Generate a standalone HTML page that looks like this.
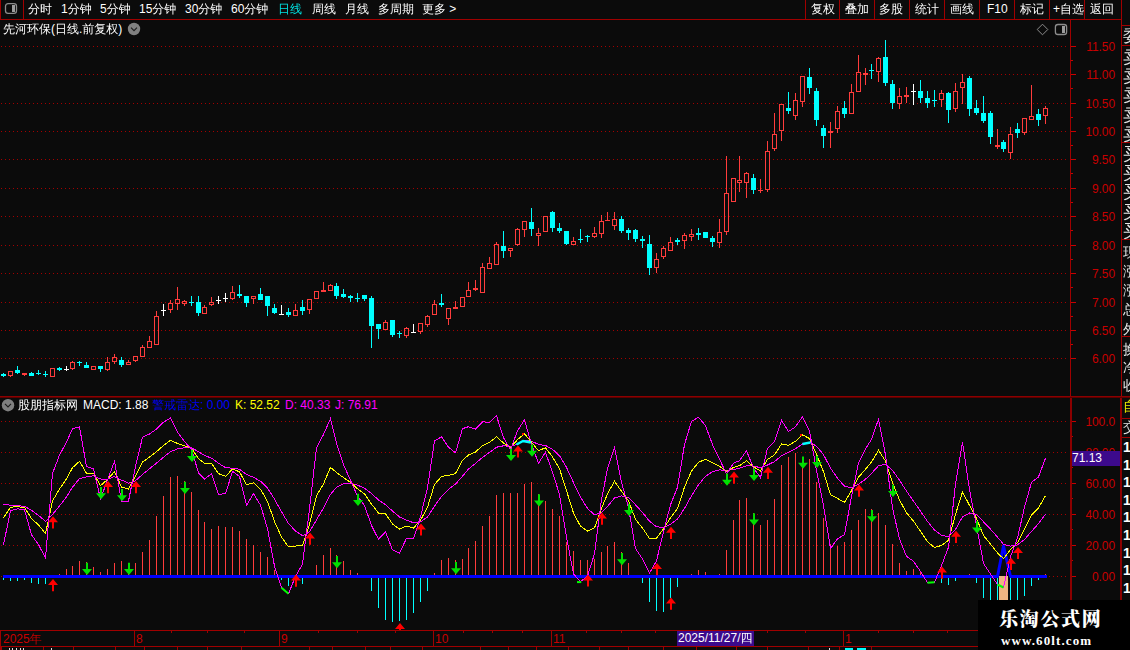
<!DOCTYPE html>
<html><head><meta charset="utf-8"><title>chart</title>
<style>
html,body{margin:0;padding:0;background:#0b0b0b;}
body{width:1130px;height:650px;position:relative;overflow:hidden;font-family:"Liberation Sans","WenQuanYi Zen Hei","Noto Sans CJK SC",sans-serif;}
.t{position:absolute;white-space:nowrap;line-height:15px;font-size:12px;}
.r{text-align:right;}
svg{position:absolute;left:0;top:0;}
</style></head><body>
<svg width="1130" height="650" viewBox="0 0 1130 650" shape-rendering="crispEdges">
<line x1="1" y1="46.5" x2="1067" y2="46.5" stroke="#a40000" stroke-width="1" stroke-dasharray="1 3"/>
<line x1="1" y1="74.5" x2="1067" y2="74.5" stroke="#a40000" stroke-width="1" stroke-dasharray="1 3"/>
<line x1="1" y1="103.5" x2="1067" y2="103.5" stroke="#a40000" stroke-width="1" stroke-dasharray="1 3"/>
<line x1="1" y1="131.5" x2="1067" y2="131.5" stroke="#a40000" stroke-width="1" stroke-dasharray="1 3"/>
<line x1="1" y1="159.5" x2="1067" y2="159.5" stroke="#a40000" stroke-width="1" stroke-dasharray="1 3"/>
<line x1="1" y1="188.5" x2="1067" y2="188.5" stroke="#a40000" stroke-width="1" stroke-dasharray="1 3"/>
<line x1="1" y1="216.5" x2="1067" y2="216.5" stroke="#a40000" stroke-width="1" stroke-dasharray="1 3"/>
<line x1="1" y1="245.5" x2="1067" y2="245.5" stroke="#a40000" stroke-width="1" stroke-dasharray="1 3"/>
<line x1="1" y1="273.5" x2="1067" y2="273.5" stroke="#a40000" stroke-width="1" stroke-dasharray="1 3"/>
<line x1="1" y1="302.5" x2="1067" y2="302.5" stroke="#a40000" stroke-width="1" stroke-dasharray="1 3"/>
<line x1="1" y1="330.5" x2="1067" y2="330.5" stroke="#a40000" stroke-width="1" stroke-dasharray="1 3"/>
<line x1="1" y1="358.5" x2="1067" y2="358.5" stroke="#a40000" stroke-width="1" stroke-dasharray="1 3"/>
<line x1="1" y1="421.5" x2="1067" y2="421.5" stroke="#a40000" stroke-width="1" stroke-dasharray="1 3"/>
<line x1="1" y1="452.5" x2="1067" y2="452.5" stroke="#a40000" stroke-width="1" stroke-dasharray="1 3"/>
<line x1="1" y1="483.5" x2="1067" y2="483.5" stroke="#a40000" stroke-width="1" stroke-dasharray="1 3"/>
<line x1="1" y1="514.5" x2="1067" y2="514.5" stroke="#a40000" stroke-width="1" stroke-dasharray="1 3"/>
<line x1="1" y1="545.5" x2="1067" y2="545.5" stroke="#a40000" stroke-width="1" stroke-dasharray="1 3"/>
<line x1="1" y1="576.5" x2="1067" y2="576.5" stroke="#a40000" stroke-width="1" stroke-dasharray="1 3"/>
<rect x="3" y="577" width="1" height="3" fill="#00ffff"/>
<rect x="10" y="577" width="1" height="4" fill="#00ffff"/>
<rect x="17" y="577" width="1" height="4" fill="#00ffff"/>
<rect x="24" y="577" width="1" height="3" fill="#00ffff"/>
<rect x="31" y="577" width="1" height="6" fill="#00ffff"/>
<rect x="38" y="577" width="1" height="7" fill="#00ffff"/>
<rect x="45" y="577" width="1" height="7" fill="#00ffff"/>
<rect x="59" y="574" width="1" height="2" fill="#ff3c3c"/>
<rect x="66" y="569" width="1" height="7" fill="#ff3c3c"/>
<rect x="72" y="566" width="1" height="10" fill="#ff3c3c"/>
<rect x="79" y="561" width="1" height="15" fill="#ff3c3c"/>
<rect x="86" y="562" width="1" height="14" fill="#ff3c3c"/>
<rect x="93" y="567" width="1" height="9" fill="#ff3c3c"/>
<rect x="100" y="572" width="1" height="4" fill="#ff3c3c"/>
<rect x="107" y="569" width="1" height="7" fill="#ff3c3c"/>
<rect x="114" y="563" width="1" height="13" fill="#ff3c3c"/>
<rect x="121" y="561" width="1" height="15" fill="#ff3c3c"/>
<rect x="128" y="563" width="1" height="13" fill="#ff3c3c"/>
<rect x="135" y="563" width="1" height="13" fill="#ff3c3c"/>
<rect x="142" y="552" width="1" height="24" fill="#ff3c3c"/>
<rect x="149" y="540" width="1" height="36" fill="#ff3c3c"/>
<rect x="156" y="516" width="1" height="60" fill="#ff3c3c"/>
<rect x="163" y="496" width="1" height="80" fill="#ff3c3c"/>
<rect x="170" y="477" width="1" height="99" fill="#ff3c3c"/>
<rect x="177" y="476" width="1" height="100" fill="#ff3c3c"/>
<rect x="184" y="481" width="1" height="95" fill="#ff3c3c"/>
<rect x="191" y="492" width="1" height="84" fill="#ff3c3c"/>
<rect x="198" y="510" width="1" height="66" fill="#ff3c3c"/>
<rect x="204" y="522" width="1" height="54" fill="#ff3c3c"/>
<rect x="211" y="529" width="1" height="47" fill="#ff3c3c"/>
<rect x="218" y="526" width="1" height="50" fill="#ff3c3c"/>
<rect x="225" y="527" width="1" height="49" fill="#ff3c3c"/>
<rect x="232" y="527" width="1" height="49" fill="#ff3c3c"/>
<rect x="239" y="531" width="1" height="45" fill="#ff3c3c"/>
<rect x="246" y="539" width="1" height="37" fill="#ff3c3c"/>
<rect x="253" y="545" width="1" height="31" fill="#ff3c3c"/>
<rect x="260" y="552" width="1" height="24" fill="#ff3c3c"/>
<rect x="267" y="557" width="1" height="19" fill="#ff3c3c"/>
<rect x="274" y="570" width="1" height="6" fill="#ff3c3c"/>
<rect x="281" y="577" width="1" height="3" fill="#00ffff"/>
<rect x="288" y="577" width="1" height="9" fill="#00ffff"/>
<rect x="295" y="577" width="1" height="5" fill="#00ffff"/>
<rect x="302" y="577" width="1" height="7" fill="#00ffff"/>
<rect x="316" y="565" width="1" height="11" fill="#ff3c3c"/>
<rect x="323" y="555" width="1" height="21" fill="#ff3c3c"/>
<rect x="330" y="548" width="1" height="28" fill="#ff3c3c"/>
<rect x="336" y="555" width="1" height="21" fill="#ff3c3c"/>
<rect x="343" y="561" width="1" height="15" fill="#ff3c3c"/>
<rect x="350" y="570" width="1" height="6" fill="#ff3c3c"/>
<rect x="357" y="573" width="1" height="3" fill="#ff3c3c"/>
<rect x="371" y="577" width="1" height="14" fill="#00ffff"/>
<rect x="378" y="577" width="1" height="31" fill="#00ffff"/>
<rect x="385" y="577" width="1" height="43" fill="#00ffff"/>
<rect x="392" y="577" width="1" height="45" fill="#00ffff"/>
<rect x="399" y="577" width="1" height="44" fill="#00ffff"/>
<rect x="406" y="577" width="1" height="43" fill="#00ffff"/>
<rect x="413" y="577" width="1" height="36" fill="#00ffff"/>
<rect x="420" y="577" width="1" height="25" fill="#00ffff"/>
<rect x="427" y="577" width="1" height="14" fill="#00ffff"/>
<rect x="434" y="573" width="1" height="3" fill="#ff3c3c"/>
<rect x="441" y="560" width="1" height="16" fill="#ff3c3c"/>
<rect x="448" y="558" width="1" height="18" fill="#ff3c3c"/>
<rect x="455" y="560" width="1" height="16" fill="#ff3c3c"/>
<rect x="462" y="559" width="1" height="17" fill="#ff3c3c"/>
<rect x="468" y="548" width="1" height="28" fill="#ff3c3c"/>
<rect x="475" y="541" width="1" height="35" fill="#ff3c3c"/>
<rect x="482" y="526" width="1" height="50" fill="#ff3c3c"/>
<rect x="489" y="516" width="1" height="60" fill="#ff3c3c"/>
<rect x="496" y="495" width="1" height="81" fill="#ff3c3c"/>
<rect x="503" y="493" width="1" height="83" fill="#ff3c3c"/>
<rect x="510" y="493" width="1" height="83" fill="#ff3c3c"/>
<rect x="517" y="493" width="1" height="83" fill="#ff3c3c"/>
<rect x="524" y="484" width="1" height="92" fill="#ff3c3c"/>
<rect x="531" y="482" width="1" height="94" fill="#ff3c3c"/>
<rect x="538" y="494" width="1" height="82" fill="#ff3c3c"/>
<rect x="545" y="501" width="1" height="75" fill="#ff3c3c"/>
<rect x="552" y="509" width="1" height="67" fill="#ff3c3c"/>
<rect x="559" y="516" width="1" height="60" fill="#ff3c3c"/>
<rect x="566" y="542" width="1" height="34" fill="#ff3c3c"/>
<rect x="573" y="551" width="1" height="25" fill="#ff3c3c"/>
<rect x="580" y="560" width="1" height="16" fill="#ff3c3c"/>
<rect x="587" y="560" width="1" height="16" fill="#ff3c3c"/>
<rect x="594" y="559" width="1" height="17" fill="#ff3c3c"/>
<rect x="601" y="552" width="1" height="24" fill="#ff3c3c"/>
<rect x="607" y="546" width="1" height="30" fill="#ff3c3c"/>
<rect x="614" y="542" width="1" height="34" fill="#ff3c3c"/>
<rect x="621" y="552" width="1" height="24" fill="#ff3c3c"/>
<rect x="628" y="563" width="1" height="13" fill="#ff3c3c"/>
<rect x="642" y="577" width="1" height="6" fill="#00ffff"/>
<rect x="649" y="577" width="1" height="25" fill="#00ffff"/>
<rect x="656" y="577" width="1" height="34" fill="#00ffff"/>
<rect x="663" y="577" width="1" height="35" fill="#00ffff"/>
<rect x="670" y="577" width="1" height="21" fill="#00ffff"/>
<rect x="677" y="577" width="1" height="10" fill="#00ffff"/>
<rect x="691" y="574" width="1" height="2" fill="#ff3c3c"/>
<rect x="698" y="570" width="1" height="6" fill="#ff3c3c"/>
<rect x="705" y="572" width="1" height="4" fill="#ff3c3c"/>
<rect x="719" y="574" width="1" height="2" fill="#ff3c3c"/>
<rect x="726" y="550" width="1" height="26" fill="#ff3c3c"/>
<rect x="733" y="520" width="1" height="56" fill="#ff3c3c"/>
<rect x="739" y="500" width="1" height="76" fill="#ff3c3c"/>
<rect x="746" y="498" width="1" height="78" fill="#ff3c3c"/>
<rect x="753" y="513" width="1" height="63" fill="#ff3c3c"/>
<rect x="760" y="525" width="1" height="51" fill="#ff3c3c"/>
<rect x="767" y="520" width="1" height="56" fill="#ff3c3c"/>
<rect x="774" y="499" width="1" height="77" fill="#ff3c3c"/>
<rect x="781" y="465" width="1" height="111" fill="#ff3c3c"/>
<rect x="788" y="457" width="1" height="119" fill="#ff3c3c"/>
<rect x="795" y="453" width="1" height="123" fill="#ff3c3c"/>
<rect x="802" y="459" width="1" height="117" fill="#ff3c3c"/>
<rect x="809" y="459" width="1" height="117" fill="#ff3c3c"/>
<rect x="816" y="482" width="1" height="94" fill="#ff3c3c"/>
<rect x="823" y="518" width="1" height="58" fill="#ff3c3c"/>
<rect x="830" y="544" width="1" height="32" fill="#ff3c3c"/>
<rect x="837" y="546" width="1" height="30" fill="#ff3c3c"/>
<rect x="844" y="542" width="1" height="34" fill="#ff3c3c"/>
<rect x="851" y="530" width="1" height="46" fill="#ff3c3c"/>
<rect x="858" y="520" width="1" height="56" fill="#ff3c3c"/>
<rect x="865" y="509" width="1" height="67" fill="#ff3c3c"/>
<rect x="871" y="509" width="1" height="67" fill="#ff3c3c"/>
<rect x="878" y="513" width="1" height="63" fill="#ff3c3c"/>
<rect x="885" y="525" width="1" height="51" fill="#ff3c3c"/>
<rect x="892" y="544" width="1" height="32" fill="#ff3c3c"/>
<rect x="899" y="563" width="1" height="13" fill="#ff3c3c"/>
<rect x="906" y="571" width="1" height="5" fill="#ff3c3c"/>
<rect x="913" y="569" width="1" height="7" fill="#ff3c3c"/>
<rect x="920" y="572" width="1" height="4" fill="#ff3c3c"/>
<rect x="941" y="577" width="1" height="6" fill="#00ffff"/>
<rect x="948" y="577" width="1" height="8" fill="#00ffff"/>
<rect x="955" y="577" width="1" height="4" fill="#00ffff"/>
<rect x="969" y="574" width="1" height="2" fill="#ff3c3c"/>
<rect x="976" y="577" width="1" height="6" fill="#00ffff"/>
<rect x="983" y="577" width="1" height="21" fill="#00ffff"/>
<rect x="990" y="577" width="1" height="23" fill="#00ffff"/>
<rect x="997" y="577" width="1" height="23" fill="#00ffff"/>
<rect x="1003" y="577" width="1" height="23" fill="#00ffff"/>
<rect x="1010" y="577" width="1" height="23" fill="#00ffff"/>
<rect x="1017" y="577" width="1" height="23" fill="#00ffff"/>
<rect x="1024" y="577" width="1" height="19" fill="#00ffff"/>
<rect x="1031" y="577" width="1" height="9" fill="#00ffff"/>
<rect x="1038" y="577" width="1" height="3" fill="#00ffff"/>
<rect x="1045" y="574" width="1" height="2" fill="#ff3c3c"/>
<rect x="999" y="576" width="9" height="24" fill="#f0b482"/>
<rect x="3" y="373" width="1" height="4" fill="#00ffff"/>
<rect x="1" y="374" width="5" height="2" fill="#00ffff"/>
<rect x="10" y="376" width="1" height="1" fill="#ff3c3c"/>
<rect x="8.5" y="371.5" width="4" height="4" fill="none" stroke="#ff3c3c" stroke-width="1"/>
<rect x="17" y="366" width="1" height="8" fill="#00ffff"/>
<rect x="15" y="370" width="5" height="3" fill="#00ffff"/>
<rect x="24" y="373" width="1" height="3" fill="#ff3c3c"/>
<rect x="22" y="373" width="5" height="2" fill="#ff3c3c"/>
<rect x="31" y="372" width="1" height="4" fill="#00ffff"/>
<rect x="29" y="373" width="5" height="3" fill="#00ffff"/>
<rect x="38" y="370" width="1" height="5" fill="#00ffff"/>
<rect x="36" y="373" width="5" height="1" fill="#00ffff"/>
<rect x="45" y="371" width="1" height="6" fill="#00ffff"/>
<rect x="43" y="374" width="5" height="1" fill="#00ffff"/>
<rect x="50.5" y="368.5" width="4" height="8" fill="none" stroke="#ff3c3c" stroke-width="1"/>
<rect x="59" y="367" width="1" height="4" fill="#00ffff"/>
<rect x="57" y="368" width="5" height="2" fill="#00ffff"/>
<rect x="66" y="366" width="1" height="5" fill="#ffffff"/>
<rect x="64" y="369" width="5" height="1" fill="#ffffff"/>
<rect x="72" y="361" width="1" height="1" fill="#ff3c3c"/>
<rect x="72" y="369" width="1" height="1" fill="#ff3c3c"/>
<rect x="70.5" y="362.5" width="4" height="6" fill="none" stroke="#ff3c3c" stroke-width="1"/>
<rect x="79" y="361" width="1" height="5" fill="#00ffff"/>
<rect x="77" y="362" width="5" height="1" fill="#00ffff"/>
<rect x="86" y="362" width="1" height="6" fill="#00ffff"/>
<rect x="84" y="365" width="5" height="3" fill="#00ffff"/>
<rect x="91.5" y="366.5" width="4" height="3" fill="none" stroke="#ff3c3c" stroke-width="1"/>
<rect x="100" y="366" width="1" height="6" fill="#00ffff"/>
<rect x="98" y="366" width="5" height="3" fill="#00ffff"/>
<rect x="107" y="357" width="1" height="5" fill="#ff3c3c"/>
<rect x="107" y="370" width="1" height="1" fill="#ff3c3c"/>
<rect x="105.5" y="362.5" width="4" height="7" fill="none" stroke="#ff3c3c" stroke-width="1"/>
<rect x="114" y="354" width="1" height="3" fill="#ff3c3c"/>
<rect x="114" y="362" width="1" height="2" fill="#ff3c3c"/>
<rect x="112.5" y="357.5" width="4" height="4" fill="none" stroke="#ff3c3c" stroke-width="1"/>
<rect x="121" y="357" width="1" height="10" fill="#00ffff"/>
<rect x="119" y="360" width="5" height="5" fill="#00ffff"/>
<rect x="128" y="360" width="1" height="2" fill="#ff3c3c"/>
<rect x="126.5" y="362.5" width="4" height="2" fill="none" stroke="#ff3c3c" stroke-width="1"/>
<rect x="135" y="361" width="1" height="1" fill="#ff3c3c"/>
<rect x="133.5" y="356.5" width="4" height="4" fill="none" stroke="#ff3c3c" stroke-width="1"/>
<rect x="142" y="345" width="1" height="2" fill="#ff3c3c"/>
<rect x="140.5" y="347.5" width="4" height="9" fill="none" stroke="#ff3c3c" stroke-width="1"/>
<rect x="149" y="336" width="1" height="5" fill="#ff3c3c"/>
<rect x="147.5" y="341.5" width="4" height="6" fill="none" stroke="#ff3c3c" stroke-width="1"/>
<rect x="156" y="311" width="1" height="5" fill="#ff3c3c"/>
<rect x="154.5" y="316.5" width="4" height="28" fill="none" stroke="#ff3c3c" stroke-width="1"/>
<rect x="163" y="304" width="1" height="12" fill="#ffffff"/>
<rect x="161" y="310" width="5" height="1" fill="#ffffff"/>
<rect x="170" y="300" width="1" height="3" fill="#ff3c3c"/>
<rect x="170" y="310" width="1" height="3" fill="#ff3c3c"/>
<rect x="168.5" y="303.5" width="4" height="6" fill="none" stroke="#ff3c3c" stroke-width="1"/>
<rect x="177" y="287" width="1" height="12" fill="#ff3c3c"/>
<rect x="177" y="304" width="1" height="6" fill="#ff3c3c"/>
<rect x="175.5" y="299.5" width="4" height="4" fill="none" stroke="#ff3c3c" stroke-width="1"/>
<rect x="184" y="300" width="1" height="1" fill="#ff3c3c"/>
<rect x="184" y="304" width="1" height="2" fill="#ff3c3c"/>
<rect x="182.5" y="301.5" width="4" height="2" fill="none" stroke="#ff3c3c" stroke-width="1"/>
<rect x="191" y="296" width="1" height="10" fill="#00ffff"/>
<rect x="189" y="302" width="5" height="1" fill="#00ffff"/>
<rect x="198" y="296" width="1" height="20" fill="#00ffff"/>
<rect x="196" y="302" width="5" height="11" fill="#00ffff"/>
<rect x="204" y="305" width="1" height="2" fill="#ff3c3c"/>
<rect x="202.5" y="307.5" width="4" height="6" fill="none" stroke="#ff3c3c" stroke-width="1"/>
<rect x="211" y="297" width="1" height="5" fill="#ff3c3c"/>
<rect x="211" y="305" width="1" height="1" fill="#ff3c3c"/>
<rect x="209.5" y="302.5" width="4" height="2" fill="none" stroke="#ff3c3c" stroke-width="1"/>
<rect x="218" y="296" width="1" height="8" fill="#ffffff"/>
<rect x="216" y="300" width="5" height="1" fill="#ffffff"/>
<rect x="225" y="293" width="1" height="9" fill="#ffffff"/>
<rect x="223" y="298" width="5" height="1" fill="#ffffff"/>
<rect x="232" y="286" width="1" height="6" fill="#ff3c3c"/>
<rect x="232" y="299" width="1" height="1" fill="#ff3c3c"/>
<rect x="230.5" y="292.5" width="4" height="6" fill="none" stroke="#ff3c3c" stroke-width="1"/>
<rect x="239" y="285" width="1" height="13" fill="#00ffff"/>
<rect x="237" y="294" width="5" height="2" fill="#00ffff"/>
<rect x="246" y="296" width="1" height="11" fill="#00ffff"/>
<rect x="244" y="296" width="5" height="7" fill="#00ffff"/>
<rect x="253" y="299" width="1" height="5" fill="#ff3c3c"/>
<rect x="251.5" y="296.5" width="4" height="2" fill="none" stroke="#ff3c3c" stroke-width="1"/>
<rect x="260" y="288" width="1" height="12" fill="#00ffff"/>
<rect x="258" y="294" width="5" height="6" fill="#00ffff"/>
<rect x="267" y="296" width="1" height="20" fill="#00ffff"/>
<rect x="265" y="296" width="5" height="10" fill="#00ffff"/>
<rect x="274" y="304" width="1" height="10" fill="#00ffff"/>
<rect x="272" y="308" width="5" height="5" fill="#00ffff"/>
<rect x="281" y="305" width="1" height="10" fill="#ffffff"/>
<rect x="279" y="314" width="5" height="1" fill="#ffffff"/>
<rect x="288" y="308" width="1" height="9" fill="#00ffff"/>
<rect x="286" y="312" width="5" height="3" fill="#00ffff"/>
<rect x="295" y="304" width="1" height="6" fill="#ff3c3c"/>
<rect x="293.5" y="310.5" width="4" height="5" fill="none" stroke="#ff3c3c" stroke-width="1"/>
<rect x="302" y="300" width="1" height="15" fill="#00ffff"/>
<rect x="300" y="307" width="5" height="4" fill="#00ffff"/>
<rect x="309" y="310" width="1" height="4" fill="#ff3c3c"/>
<rect x="307.5" y="299.5" width="4" height="10" fill="none" stroke="#ff3c3c" stroke-width="1"/>
<rect x="314.5" y="291.5" width="4" height="7" fill="none" stroke="#ff3c3c" stroke-width="1"/>
<rect x="323" y="282" width="1" height="10" fill="#ff3c3c"/>
<rect x="321" y="290" width="5" height="2" fill="#ff3c3c"/>
<rect x="330" y="284" width="1" height="1" fill="#ff3c3c"/>
<rect x="328.5" y="285.5" width="4" height="5" fill="none" stroke="#ff3c3c" stroke-width="1"/>
<rect x="336" y="283" width="1" height="16" fill="#00ffff"/>
<rect x="334" y="286" width="5" height="10" fill="#00ffff"/>
<rect x="343" y="289" width="1" height="9" fill="#00ffff"/>
<rect x="341" y="294" width="5" height="3" fill="#00ffff"/>
<rect x="350" y="295" width="1" height="7" fill="#00ffff"/>
<rect x="348" y="296" width="5" height="2" fill="#00ffff"/>
<rect x="357" y="293" width="1" height="9" fill="#00ffff"/>
<rect x="355" y="298" width="5" height="1" fill="#00ffff"/>
<rect x="364" y="295" width="1" height="6" fill="#00ffff"/>
<rect x="362" y="295" width="5" height="4" fill="#00ffff"/>
<rect x="371" y="296" width="1" height="52" fill="#00ffff"/>
<rect x="369" y="298" width="5" height="28" fill="#00ffff"/>
<rect x="378" y="324" width="1" height="15" fill="#00ffff"/>
<rect x="376" y="324" width="5" height="5" fill="#00ffff"/>
<rect x="385" y="320" width="1" height="2" fill="#ff3c3c"/>
<rect x="383.5" y="322.5" width="4" height="7" fill="none" stroke="#ff3c3c" stroke-width="1"/>
<rect x="392" y="320" width="1" height="17" fill="#00ffff"/>
<rect x="390" y="320" width="5" height="15" fill="#00ffff"/>
<rect x="399" y="331" width="1" height="7" fill="#00ffff"/>
<rect x="397" y="333" width="5" height="1" fill="#00ffff"/>
<rect x="406" y="327" width="1" height="1" fill="#ff3c3c"/>
<rect x="406" y="336" width="1" height="2" fill="#ff3c3c"/>
<rect x="404.5" y="328.5" width="4" height="7" fill="none" stroke="#ff3c3c" stroke-width="1"/>
<rect x="413" y="324" width="1" height="9" fill="#ffffff"/>
<rect x="411" y="332" width="5" height="1" fill="#ffffff"/>
<rect x="420" y="332" width="1" height="2" fill="#ff3c3c"/>
<rect x="418.5" y="323.5" width="4" height="8" fill="none" stroke="#ff3c3c" stroke-width="1"/>
<rect x="427" y="315" width="1" height="1" fill="#ff3c3c"/>
<rect x="427" y="325" width="1" height="2" fill="#ff3c3c"/>
<rect x="425.5" y="316.5" width="4" height="8" fill="none" stroke="#ff3c3c" stroke-width="1"/>
<rect x="434" y="300" width="1" height="4" fill="#ff3c3c"/>
<rect x="432.5" y="304.5" width="4" height="10" fill="none" stroke="#ff3c3c" stroke-width="1"/>
<rect x="441" y="294" width="1" height="13" fill="#00ffff"/>
<rect x="439" y="303" width="5" height="2" fill="#00ffff"/>
<rect x="448" y="319" width="1" height="6" fill="#ff3c3c"/>
<rect x="446.5" y="308.5" width="4" height="10" fill="none" stroke="#ff3c3c" stroke-width="1"/>
<rect x="455" y="301" width="1" height="8" fill="#ff3c3c"/>
<rect x="453" y="307" width="5" height="2" fill="#ff3c3c"/>
<rect x="460.5" y="297.5" width="4" height="9" fill="none" stroke="#ff3c3c" stroke-width="1"/>
<rect x="468" y="282" width="1" height="8" fill="#ff3c3c"/>
<rect x="466.5" y="290.5" width="4" height="6" fill="none" stroke="#ff3c3c" stroke-width="1"/>
<rect x="475" y="280" width="1" height="11" fill="#ff3c3c"/>
<rect x="473" y="288" width="5" height="2" fill="#ff3c3c"/>
<rect x="482" y="263" width="1" height="4" fill="#ff3c3c"/>
<rect x="480.5" y="267.5" width="4" height="25" fill="none" stroke="#ff3c3c" stroke-width="1"/>
<rect x="489" y="257" width="1" height="6" fill="#ff3c3c"/>
<rect x="487.5" y="263.5" width="4" height="5" fill="none" stroke="#ff3c3c" stroke-width="1"/>
<rect x="496" y="242" width="1" height="2" fill="#ff3c3c"/>
<rect x="494.5" y="244.5" width="4" height="20" fill="none" stroke="#ff3c3c" stroke-width="1"/>
<rect x="503" y="231" width="1" height="27" fill="#00ffff"/>
<rect x="501" y="246" width="5" height="5" fill="#00ffff"/>
<rect x="510" y="251" width="1" height="6" fill="#ff3c3c"/>
<rect x="508.5" y="248.5" width="4" height="2" fill="none" stroke="#ff3c3c" stroke-width="1"/>
<rect x="517" y="228" width="1" height="1" fill="#ff3c3c"/>
<rect x="517" y="245" width="1" height="1" fill="#ff3c3c"/>
<rect x="515.5" y="229.5" width="4" height="15" fill="none" stroke="#ff3c3c" stroke-width="1"/>
<rect x="524" y="230" width="1" height="7" fill="#ff3c3c"/>
<rect x="522.5" y="221.5" width="4" height="8" fill="none" stroke="#ff3c3c" stroke-width="1"/>
<rect x="531" y="208" width="1" height="28" fill="#00ffff"/>
<rect x="529" y="222" width="5" height="7" fill="#00ffff"/>
<rect x="538" y="228" width="1" height="5" fill="#ff3c3c"/>
<rect x="538" y="236" width="1" height="10" fill="#ff3c3c"/>
<rect x="536.5" y="233.5" width="4" height="2" fill="none" stroke="#ff3c3c" stroke-width="1"/>
<rect x="543.5" y="216.5" width="4" height="15" fill="none" stroke="#ff3c3c" stroke-width="1"/>
<rect x="552" y="211" width="1" height="21" fill="#00ffff"/>
<rect x="550" y="212" width="5" height="16" fill="#00ffff"/>
<rect x="559" y="223" width="1" height="10" fill="#00ffff"/>
<rect x="557" y="228" width="5" height="3" fill="#00ffff"/>
<rect x="566" y="231" width="1" height="14" fill="#00ffff"/>
<rect x="564" y="231" width="5" height="13" fill="#00ffff"/>
<rect x="573" y="237" width="1" height="4" fill="#ff3c3c"/>
<rect x="571.5" y="241.5" width="4" height="3" fill="none" stroke="#ff3c3c" stroke-width="1"/>
<rect x="580" y="229" width="1" height="14" fill="#00ffff"/>
<rect x="578" y="239" width="5" height="1" fill="#00ffff"/>
<rect x="587" y="235" width="1" height="7" fill="#00ffff"/>
<rect x="585" y="236" width="5" height="1" fill="#00ffff"/>
<rect x="594" y="227" width="1" height="6" fill="#ff3c3c"/>
<rect x="594" y="237" width="1" height="1" fill="#ff3c3c"/>
<rect x="592.5" y="233.5" width="4" height="3" fill="none" stroke="#ff3c3c" stroke-width="1"/>
<rect x="601" y="215" width="1" height="6" fill="#ff3c3c"/>
<rect x="601" y="234" width="1" height="4" fill="#ff3c3c"/>
<rect x="599.5" y="221.5" width="4" height="12" fill="none" stroke="#ff3c3c" stroke-width="1"/>
<rect x="607" y="212" width="1" height="9" fill="#ff3c3c"/>
<rect x="605" y="220" width="5" height="1" fill="#ff3c3c"/>
<rect x="614" y="212" width="1" height="7" fill="#ff3c3c"/>
<rect x="614" y="226" width="1" height="4" fill="#ff3c3c"/>
<rect x="612.5" y="219.5" width="4" height="6" fill="none" stroke="#ff3c3c" stroke-width="1"/>
<rect x="621" y="216" width="1" height="17" fill="#00ffff"/>
<rect x="619" y="219" width="5" height="12" fill="#00ffff"/>
<rect x="628" y="228" width="1" height="12" fill="#00ffff"/>
<rect x="626" y="230" width="5" height="3" fill="#00ffff"/>
<rect x="635" y="229" width="1" height="13" fill="#00ffff"/>
<rect x="633" y="230" width="5" height="9" fill="#00ffff"/>
<rect x="642" y="236" width="1" height="12" fill="#00ffff"/>
<rect x="640" y="239" width="5" height="2" fill="#00ffff"/>
<rect x="649" y="235" width="1" height="40" fill="#00ffff"/>
<rect x="647" y="244" width="5" height="24" fill="#00ffff"/>
<rect x="656" y="253" width="1" height="6" fill="#ff3c3c"/>
<rect x="656" y="268" width="1" height="5" fill="#ff3c3c"/>
<rect x="654.5" y="259.5" width="4" height="8" fill="none" stroke="#ff3c3c" stroke-width="1"/>
<rect x="663" y="246" width="1" height="2" fill="#ff3c3c"/>
<rect x="663" y="257" width="1" height="2" fill="#ff3c3c"/>
<rect x="661.5" y="248.5" width="4" height="8" fill="none" stroke="#ff3c3c" stroke-width="1"/>
<rect x="670" y="237" width="1" height="5" fill="#ff3c3c"/>
<rect x="668.5" y="242.5" width="4" height="8" fill="none" stroke="#ff3c3c" stroke-width="1"/>
<rect x="677" y="238" width="1" height="7" fill="#00ffff"/>
<rect x="675" y="240" width="5" height="2" fill="#00ffff"/>
<rect x="684" y="233" width="1" height="2" fill="#ff3c3c"/>
<rect x="684" y="241" width="1" height="8" fill="#ff3c3c"/>
<rect x="682.5" y="235.5" width="4" height="5" fill="none" stroke="#ff3c3c" stroke-width="1"/>
<rect x="691" y="229" width="1" height="5" fill="#ff3c3c"/>
<rect x="691" y="237" width="1" height="4" fill="#ff3c3c"/>
<rect x="689.5" y="234.5" width="4" height="2" fill="none" stroke="#ff3c3c" stroke-width="1"/>
<rect x="698" y="228" width="1" height="12" fill="#00ffff"/>
<rect x="696" y="233" width="5" height="2" fill="#00ffff"/>
<rect x="705" y="232" width="1" height="6" fill="#00ffff"/>
<rect x="703" y="232" width="5" height="6" fill="#00ffff"/>
<rect x="712" y="236" width="1" height="11" fill="#00ffff"/>
<rect x="710" y="238" width="5" height="4" fill="#00ffff"/>
<rect x="719" y="219" width="1" height="13" fill="#ff3c3c"/>
<rect x="719" y="243" width="1" height="5" fill="#ff3c3c"/>
<rect x="717.5" y="232.5" width="4" height="10" fill="none" stroke="#ff3c3c" stroke-width="1"/>
<rect x="726" y="156" width="1" height="37" fill="#ff3c3c"/>
<rect x="726" y="232" width="1" height="3" fill="#ff3c3c"/>
<rect x="724.5" y="193.5" width="4" height="38" fill="none" stroke="#ff3c3c" stroke-width="1"/>
<rect x="731.5" y="178.5" width="4" height="23" fill="none" stroke="#ff3c3c" stroke-width="1"/>
<rect x="739" y="156" width="1" height="24" fill="#ff3c3c"/>
<rect x="739" y="183" width="1" height="9" fill="#ff3c3c"/>
<rect x="737.5" y="180.5" width="4" height="2" fill="none" stroke="#ff3c3c" stroke-width="1"/>
<rect x="746" y="172" width="1" height="1" fill="#ff3c3c"/>
<rect x="746" y="183" width="1" height="15" fill="#ff3c3c"/>
<rect x="744.5" y="173.5" width="4" height="9" fill="none" stroke="#ff3c3c" stroke-width="1"/>
<rect x="753" y="174" width="1" height="20" fill="#00ffff"/>
<rect x="751" y="178" width="5" height="12" fill="#00ffff"/>
<rect x="760" y="179" width="1" height="14" fill="#ff3c3c"/>
<rect x="758" y="190" width="5" height="1" fill="#ff3c3c"/>
<rect x="767" y="141" width="1" height="10" fill="#ff3c3c"/>
<rect x="767" y="190" width="1" height="2" fill="#ff3c3c"/>
<rect x="765.5" y="151.5" width="4" height="38" fill="none" stroke="#ff3c3c" stroke-width="1"/>
<rect x="774" y="113" width="1" height="21" fill="#ff3c3c"/>
<rect x="774" y="149" width="1" height="2" fill="#ff3c3c"/>
<rect x="772.5" y="134.5" width="4" height="14" fill="none" stroke="#ff3c3c" stroke-width="1"/>
<rect x="781" y="131" width="1" height="10" fill="#ff3c3c"/>
<rect x="779.5" y="104.5" width="4" height="26" fill="none" stroke="#ff3c3c" stroke-width="1"/>
<rect x="788" y="92" width="1" height="22" fill="#00ffff"/>
<rect x="786" y="108" width="5" height="3" fill="#00ffff"/>
<rect x="795" y="93" width="1" height="7" fill="#ff3c3c"/>
<rect x="795" y="116" width="1" height="4" fill="#ff3c3c"/>
<rect x="793.5" y="100.5" width="4" height="15" fill="none" stroke="#ff3c3c" stroke-width="1"/>
<rect x="802" y="102" width="1" height="5" fill="#ff3c3c"/>
<rect x="800.5" y="76.5" width="4" height="25" fill="none" stroke="#ff3c3c" stroke-width="1"/>
<rect x="809" y="68" width="1" height="26" fill="#00ffff"/>
<rect x="807" y="77" width="5" height="11" fill="#00ffff"/>
<rect x="816" y="88" width="1" height="38" fill="#00ffff"/>
<rect x="814" y="91" width="5" height="29" fill="#00ffff"/>
<rect x="823" y="125" width="1" height="23" fill="#00ffff"/>
<rect x="821" y="128" width="5" height="8" fill="#00ffff"/>
<rect x="830" y="122" width="1" height="26" fill="#ff3c3c"/>
<rect x="828" y="131" width="5" height="2" fill="#ff3c3c"/>
<rect x="837" y="106" width="1" height="5" fill="#ff3c3c"/>
<rect x="837" y="129" width="1" height="4" fill="#ff3c3c"/>
<rect x="835.5" y="111.5" width="4" height="17" fill="none" stroke="#ff3c3c" stroke-width="1"/>
<rect x="844" y="101" width="1" height="17" fill="#00ffff"/>
<rect x="842" y="108" width="5" height="6" fill="#00ffff"/>
<rect x="851" y="84" width="1" height="8" fill="#ff3c3c"/>
<rect x="849.5" y="92.5" width="4" height="21" fill="none" stroke="#ff3c3c" stroke-width="1"/>
<rect x="858" y="55" width="1" height="17" fill="#ff3c3c"/>
<rect x="856.5" y="72.5" width="4" height="19" fill="none" stroke="#ff3c3c" stroke-width="1"/>
<rect x="865" y="68" width="1" height="17" fill="#ff3c3c"/>
<rect x="863" y="73" width="5" height="2" fill="#ff3c3c"/>
<rect x="871" y="64" width="1" height="15" fill="#00ffff"/>
<rect x="869" y="70" width="5" height="1" fill="#00ffff"/>
<rect x="878" y="57" width="1" height="1" fill="#ff3c3c"/>
<rect x="878" y="72" width="1" height="10" fill="#ff3c3c"/>
<rect x="876.5" y="58.5" width="4" height="13" fill="none" stroke="#ff3c3c" stroke-width="1"/>
<rect x="885" y="40" width="1" height="46" fill="#00ffff"/>
<rect x="883" y="57" width="5" height="26" fill="#00ffff"/>
<rect x="892" y="80" width="1" height="29" fill="#00ffff"/>
<rect x="890" y="84" width="5" height="19" fill="#00ffff"/>
<rect x="899" y="88" width="1" height="8" fill="#ff3c3c"/>
<rect x="899" y="104" width="1" height="5" fill="#ff3c3c"/>
<rect x="897.5" y="96.5" width="4" height="7" fill="none" stroke="#ff3c3c" stroke-width="1"/>
<rect x="906" y="87" width="1" height="16" fill="#ff3c3c"/>
<rect x="904" y="95" width="5" height="2" fill="#ff3c3c"/>
<rect x="913" y="84" width="1" height="21" fill="#ffffff"/>
<rect x="911" y="91" width="5" height="1" fill="#ffffff"/>
<rect x="920" y="80" width="1" height="23" fill="#00ffff"/>
<rect x="918" y="91" width="5" height="7" fill="#00ffff"/>
<rect x="927" y="91" width="1" height="17" fill="#00ffff"/>
<rect x="925" y="98" width="5" height="5" fill="#00ffff"/>
<rect x="934" y="90" width="1" height="17" fill="#00ffff"/>
<rect x="932" y="100" width="5" height="1" fill="#00ffff"/>
<rect x="941" y="90" width="1" height="3" fill="#ff3c3c"/>
<rect x="941" y="100" width="1" height="7" fill="#ff3c3c"/>
<rect x="939.5" y="93.5" width="4" height="6" fill="none" stroke="#ff3c3c" stroke-width="1"/>
<rect x="948" y="92" width="1" height="31" fill="#00ffff"/>
<rect x="946" y="93" width="5" height="17" fill="#00ffff"/>
<rect x="955" y="83" width="1" height="8" fill="#ff3c3c"/>
<rect x="955" y="109" width="1" height="3" fill="#ff3c3c"/>
<rect x="953.5" y="91.5" width="4" height="17" fill="none" stroke="#ff3c3c" stroke-width="1"/>
<rect x="962" y="74" width="1" height="8" fill="#ff3c3c"/>
<rect x="962" y="88" width="1" height="16" fill="#ff3c3c"/>
<rect x="960.5" y="82.5" width="4" height="5" fill="none" stroke="#ff3c3c" stroke-width="1"/>
<rect x="969" y="76" width="1" height="40" fill="#00ffff"/>
<rect x="967" y="78" width="5" height="31" fill="#00ffff"/>
<rect x="976" y="100" width="1" height="15" fill="#00ffff"/>
<rect x="974" y="108" width="5" height="5" fill="#00ffff"/>
<rect x="983" y="96" width="1" height="27" fill="#00ffff"/>
<rect x="981" y="113" width="5" height="8" fill="#00ffff"/>
<rect x="990" y="111" width="1" height="33" fill="#00ffff"/>
<rect x="988" y="113" width="5" height="24" fill="#00ffff"/>
<rect x="997" y="129" width="1" height="20" fill="#ff3c3c"/>
<rect x="995" y="145" width="5" height="2" fill="#ff3c3c"/>
<rect x="1003" y="140" width="1" height="12" fill="#00ffff"/>
<rect x="1001" y="142" width="5" height="7" fill="#00ffff"/>
<rect x="1010" y="127" width="1" height="7" fill="#ff3c3c"/>
<rect x="1010" y="153" width="1" height="6" fill="#ff3c3c"/>
<rect x="1008.5" y="134.5" width="4" height="18" fill="none" stroke="#ff3c3c" stroke-width="1"/>
<rect x="1017" y="123" width="1" height="15" fill="#00ffff"/>
<rect x="1015" y="129" width="5" height="4" fill="#00ffff"/>
<rect x="1024" y="133" width="1" height="2" fill="#ff3c3c"/>
<rect x="1022.5" y="118.5" width="4" height="14" fill="none" stroke="#ff3c3c" stroke-width="1"/>
<rect x="1031" y="85" width="1" height="31" fill="#ff3c3c"/>
<rect x="1029.5" y="116.5" width="4" height="3" fill="none" stroke="#ff3c3c" stroke-width="1"/>
<rect x="1038" y="109" width="1" height="17" fill="#00ffff"/>
<rect x="1036" y="114" width="5" height="6" fill="#00ffff"/>
<rect x="1045" y="106" width="1" height="2" fill="#ff3c3c"/>
<rect x="1045" y="116" width="1" height="8" fill="#ff3c3c"/>
<rect x="1043.5" y="108.5" width="4" height="7" fill="none" stroke="#ff3c3c" stroke-width="1"/>
<polyline points="3,576.5 997.5,576.5 1003.5,546 1010.5,576.5 1047,576.5" fill="none" stroke="#0000ff" stroke-width="3" stroke-linejoin="round" shape-rendering="auto"/>
<polyline points="3.5,504.3 10.5,505.2 17.5,505.7 24.5,506.3 31.5,510.4 38.5,515.3 45.5,521.4 52.5,514.5 59.5,506.0 66.5,496.9 72.5,487.2 79.5,478.6 86.5,476.9 93.5,475.7 100.5,479.0 107.5,479.2 114.5,476.6 121.5,480.1 128.5,483.1 135.5,480.7 142.5,474.5 149.5,468.7 156.5,463.1 163.5,457.2 170.5,451.6 177.5,448.9 184.5,447.8 191.5,448.0 198.5,451.6 204.5,455.5 211.5,458.1 218.5,463.3 225.5,467.6 232.5,468.2 239.5,469.3 246.5,474.5 253.5,477.3 260.5,481.2 267.5,488.0 274.5,499.1 281.5,511.8 288.5,523.5 295.5,531.0 302.5,535.8 309.5,531.9 316.5,519.9 323.5,507.9 330.5,494.4 336.5,487.1 343.5,483.9 350.5,483.4 357.5,485.2 364.5,488.1 371.5,493.5 378.5,500.0 385.5,504.6 392.5,511.0 399.5,517.0 406.5,520.1 413.5,522.8 420.5,521.9 427.5,517.0 434.5,506.2 441.5,496.3 448.5,489.3 455.5,484.1 462.5,476.2 468.5,469.1 475.5,463.4 482.5,457.4 489.5,452.4 496.5,447.2 503.5,445.8 510.5,446.4 517.5,444.2 524.5,440.7 531.5,441.2 538.5,444.4 545.5,445.5 552.5,449.3 559.5,455.8 566.5,467.4 573.5,482.6 580.5,497.2 587.5,508.4 594.5,514.9 601.5,512.7 607.5,506.4 614.5,498.0 621.5,495.8 628.5,497.5 635.5,504.8 642.5,512.5 649.5,521.2 656.5,526.8 663.5,527.5 670.5,524.3 677.5,519.0 684.5,508.4 691.5,495.9 698.5,484.7 705.5,476.3 712.5,471.7 719.5,469.9 726.5,470.5 733.5,469.5 739.5,468.2 746.5,465.7 753.5,466.1 760.5,467.7 767.5,465.0 774.5,461.6 781.5,455.7 788.5,452.2 795.5,448.6 802.5,444.0 809.5,442.2 816.5,446.2 823.5,454.7 830.5,468.1 837.5,478.2 844.5,486.2 851.5,487.7 858.5,484.2 865.5,479.2 871.5,473.5 878.5,465.7 885.5,464.2 892.5,470.4 899.5,480.2 906.5,491.1 913.5,501.1 920.5,511.2 927.5,521.4 934.5,530.1 941.5,535.2 948.5,536.9 955.5,529.4 962.5,516.9 969.5,513.0 976.5,514.8 983.5,521.8 990.5,529.2 997.5,537.1 1003.5,544.3 1010.5,546.1 1017.5,544.9 1024.5,539.6 1031.5,531.4 1038.5,523.6 1045.5,514.2" fill="none" stroke="#ff00ff" stroke-width="1"/>
<polyline points="3.5,517.8 10.5,507.1 17.5,506.8 24.5,507.5 31.5,518.5 38.5,525.0 45.5,533.6 52.5,500.9 59.5,489.1 66.5,478.7 72.5,467.7 79.5,461.3 86.5,473.4 93.5,473.4 100.5,485.7 107.5,479.5 114.5,471.6 121.5,487.1 128.5,489.1 135.5,475.9 142.5,462.1 149.5,457.1 156.5,451.7 163.5,445.5 170.5,440.4 177.5,443.4 184.5,445.7 191.5,448.4 198.5,458.7 204.5,463.3 211.5,463.3 218.5,473.6 225.5,476.3 232.5,469.2 239.5,471.7 246.5,484.8 253.5,482.8 260.5,489.2 267.5,501.5 274.5,521.5 281.5,537.1 288.5,546.9 295.5,546.1 302.5,545.2 309.5,524.3 316.5,495.8 323.5,483.9 330.5,467.4 336.5,472.5 343.5,477.6 350.5,482.4 357.5,488.8 364.5,493.9 371.5,504.1 378.5,513.1 385.5,513.7 392.5,524.0 399.5,529.1 406.5,526.1 413.5,528.1 420.5,520.2 427.5,507.3 434.5,484.5 441.5,476.5 448.5,475.3 455.5,473.6 462.5,460.3 468.5,455.0 475.5,452.0 482.5,445.6 489.5,442.4 496.5,436.8 503.5,443.0 510.5,447.6 517.5,439.7 524.5,433.8 531.5,442.2 538.5,450.7 545.5,447.8 552.5,456.9 559.5,468.7 566.5,490.7 573.5,513.1 580.5,526.2 587.5,531.0 594.5,527.9 601.5,508.3 607.5,493.9 614.5,481.3 621.5,491.2 628.5,500.9 635.5,519.3 642.5,528.0 649.5,538.5 656.5,538.2 663.5,528.9 670.5,517.8 677.5,508.4 684.5,487.1 691.5,471.1 698.5,462.2 705.5,459.4 712.5,462.7 719.5,466.3 726.5,471.7 733.5,467.4 739.5,465.7 746.5,460.8 753.5,466.7 760.5,471.0 767.5,459.5 774.5,454.9 781.5,443.9 788.5,445.3 795.5,441.3 802.5,434.9 809.5,438.5 816.5,454.2 823.5,471.7 830.5,494.9 837.5,498.4 844.5,502.4 851.5,490.6 858.5,477.2 865.5,469.2 871.5,462.1 878.5,450.3 885.5,461.1 892.5,482.9 899.5,499.9 906.5,512.9 913.5,521.1 920.5,531.3 927.5,541.8 934.5,547.5 941.5,545.4 948.5,540.3 955.5,514.3 962.5,492.0 969.5,505.3 976.5,518.4 983.5,535.6 990.5,544.1 997.5,552.9 1003.5,558.7 1010.5,549.6 1017.5,542.7 1024.5,528.8 1031.5,515.0 1038.5,508.0 1045.5,495.6" fill="none" stroke="#ffff00" stroke-width="1"/>
<polyline points="3.5,544.7 10.5,510.8 17.5,508.8 24.5,509.9 31.5,534.8 38.5,544.6 45.5,558.0 52.5,473.5 59.5,455.1 66.5,442.2 72.5,428.7 79.5,426.9 86.5,466.6 93.5,468.9 100.5,498.9 107.5,480.1 114.5,461.4 121.5,501.0 128.5,501.0 135.5,466.3 142.5,437.3 149.5,434.0 156.5,429.1 163.5,422.2 170.5,418.0 177.5,432.3 184.5,441.6 191.5,449.2 198.5,472.9 204.5,479.0 211.5,473.8 218.5,494.3 225.5,493.7 232.5,471.4 239.5,476.4 246.5,505.4 253.5,493.8 260.5,505.1 267.5,528.6 274.5,566.1 281.5,587.8 288.5,593.7 295.5,576.3 302.5,564.1 309.5,508.9 316.5,447.7 323.5,434.5 330.5,418.6 336.5,443.3 343.5,464.8 350.5,480.4 357.5,496.0 364.5,505.4 371.5,525.5 378.5,539.3 385.5,531.9 392.5,549.9 399.5,553.1 406.5,538.3 413.5,538.9 420.5,516.9 427.5,487.7 434.5,441.1 441.5,436.9 448.5,447.2 455.5,452.8 462.5,428.7 468.5,426.7 475.5,429.2 482.5,421.8 489.5,422.4 496.5,415.8 503.5,437.5 510.5,450.0 517.5,430.7 524.5,419.9 531.5,444.3 538.5,463.3 545.5,452.3 552.5,472.2 559.5,494.5 566.5,537.2 573.5,574.0 580.5,581.6 587.5,576.2 594.5,553.7 601.5,499.5 607.5,468.8 614.5,447.7 621.5,482.1 628.5,507.7 635.5,548.4 642.5,559.1 649.5,573.1 656.5,560.8 663.5,531.7 670.5,504.9 677.5,487.2 684.5,444.5 691.5,421.4 698.5,417.2 705.5,425.7 712.5,444.6 719.5,459.1 726.5,474.0 733.5,463.1 739.5,460.7 746.5,450.8 753.5,468.0 760.5,477.7 767.5,448.4 774.5,441.5 781.5,420.3 788.5,431.5 795.5,426.8 802.5,416.6 809.5,431.0 816.5,470.3 823.5,505.7 830.5,548.5 837.5,538.8 844.5,534.6 851.5,496.5 858.5,463.1 865.5,449.1 871.5,439.3 878.5,419.3 885.5,455.0 892.5,507.8 899.5,539.1 906.5,556.4 913.5,561.2 920.5,571.5 927.5,582.7 934.5,582.3 941.5,565.7 948.5,547.2 955.5,484.1 962.5,442.2 969.5,489.8 976.5,525.6 983.5,563.4 990.5,573.9 997.5,584.5 1003.5,587.5 1010.5,556.7 1017.5,538.1 1024.5,507.2 1031.5,482.2 1038.5,476.9 1045.5,458.2" fill="none" stroke="#ff00ff" stroke-width="1"/>
<line x1="281.5" y1="587.8" x2="288.5" y2="593.7" stroke="#00ff00" stroke-width="2" shape-rendering="auto"/>
<line x1="577.0" y1="582.1" x2="581.3" y2="582.1" stroke="#00ff00" stroke-width="2" shape-rendering="auto"/>
<line x1="927.5" y1="582.7" x2="934.5" y2="582.3" stroke="#00ff00" stroke-width="2" shape-rendering="auto"/>
<line x1="997.5" y1="584.5" x2="1003.5" y2="587.5" stroke="#00ff00" stroke-width="2" shape-rendering="auto"/>
<polyline points="516.5,444.5 523,441 531,442.6" fill="none" stroke="#00ffff" stroke-width="2.5" shape-rendering="auto"/>
<polyline points="802.5,444 810.5,442.6" fill="none" stroke="#00ffff" stroke-width="2.5" shape-rendering="auto"/>
<rect x="522" y="433" width="2" height="2" fill="#ff0000"/>
<rect x="800" y="434" width="2" height="2" fill="#ff0000"/>
<polygon points="53,516.2 58,522.2 54,522.2 54,528.4000000000001 52,528.4000000000001 52,522.2 48,522.2" fill="#ff0000" shape-rendering="auto"/>
<polygon points="53,579 58,585 54,585 54,591.2 52,591.2 52,585 48,585" fill="#ff0000" shape-rendering="auto"/>
<polygon points="101,499.2 106,493.2 102,493.2 102,487.0 100,487.0 100,493.2 96,493.2" fill="#00e000" shape-rendering="auto"/>
<polygon points="108,481 113,487 109,487 109,493.2 107,493.2 107,487 103,487" fill="#ff0000" shape-rendering="auto"/>
<polygon points="122,501.3 127,495.3 123,495.3 123,489.1 121,489.1 121,495.3 117,495.3" fill="#00e000" shape-rendering="auto"/>
<polygon points="136,481 141,487 137,487 137,493.2 135,493.2 135,487 131,487" fill="#ff0000" shape-rendering="auto"/>
<polygon points="87,575 92,569 88,569 88,562.8 86,562.8 86,569 82,569" fill="#00e000" shape-rendering="auto"/>
<polygon points="129,575 134,569 130,569 130,562.8 128,562.8 128,569 124,569" fill="#00e000" shape-rendering="auto"/>
<polygon points="185,494 190,488 186,488 186,481.8 184,481.8 184,488 180,488" fill="#00e000" shape-rendering="auto"/>
<polygon points="192,462 197,456 193,456 193,449.8 191,449.8 191,456 187,456" fill="#00e000" shape-rendering="auto"/>
<polygon points="296,574.6 301,580.6 297,580.6 297,586.8000000000001 295,586.8000000000001 295,580.6 291,580.6" fill="#ff0000" shape-rendering="auto"/>
<polygon points="310,532.6 315,538.6 311,538.6 311,544.8000000000001 309,544.8000000000001 309,538.6 305,538.6" fill="#ff0000" shape-rendering="auto"/>
<polygon points="337,568.2 342,562.2 338,562.2 338,556.0 336,556.0 336,562.2 332,562.2" fill="#00e000" shape-rendering="auto"/>
<polygon points="358,505.9 363,499.9 359,499.9 359,493.7 357,493.7 357,499.9 353,499.9" fill="#00e000" shape-rendering="auto"/>
<polygon points="400,623.1 405,629.1 401,629.1 401,635.3000000000001 399,635.3000000000001 399,629.1 395,629.1" fill="#ff0000" shape-rendering="auto"/>
<polygon points="421,523.4 426,529.4 422,529.4 422,535.6 420,535.6 420,529.4 416,529.4" fill="#ff0000" shape-rendering="auto"/>
<polygon points="456,574.2 461,568.2 457,568.2 457,562.0 455,562.0 455,568.2 451,568.2" fill="#00e000" shape-rendering="auto"/>
<polygon points="511,461 516,455 512,455 512,448.8 510,448.8 510,455 506,455" fill="#00e000" shape-rendering="auto"/>
<polygon points="518,445.4 523,451.4 519,451.4 519,457.59999999999997 517,457.59999999999997 517,451.4 513,451.4" fill="#ff0000" shape-rendering="auto"/>
<polygon points="532,456.7 537,450.7 533,450.7 533,444.5 531,444.5 531,450.7 527,450.7" fill="#00e000" shape-rendering="auto"/>
<polygon points="539,506.5 544,500.5 540,500.5 540,494.3 538,494.3 538,500.5 534,500.5" fill="#00e000" shape-rendering="auto"/>
<polygon points="588,574.4 593,580.4 589,580.4 589,586.6 587,586.6 587,580.4 583,580.4" fill="#ff0000" shape-rendering="auto"/>
<polygon points="602,512.5 607,518.5 603,518.5 603,524.7 601,524.7 601,518.5 597,518.5" fill="#ff0000" shape-rendering="auto"/>
<polygon points="622,565.2 627,559.2 623,559.2 623,553.0 621,553.0 621,559.2 617,559.2" fill="#00e000" shape-rendering="auto"/>
<polygon points="629,516 634,510 630,510 630,503.8 628,503.8 628,510 624,510" fill="#00e000" shape-rendering="auto"/>
<polygon points="657,563.1 662,569.1 658,569.1 658,575.3000000000001 656,575.3000000000001 656,569.1 652,569.1" fill="#ff0000" shape-rendering="auto"/>
<polygon points="671,526.7 676,532.7 672,532.7 672,538.9000000000001 670,538.9000000000001 670,532.7 666,532.7" fill="#ff0000" shape-rendering="auto"/>
<polygon points="671,597.5 676,603.5 672,603.5 672,609.7 670,609.7 670,603.5 666,603.5" fill="#ff0000" shape-rendering="auto"/>
<polygon points="727,485.8 732,479.8 728,479.8 728,473.6 726,473.6 726,479.8 722,479.8" fill="#00e000" shape-rendering="auto"/>
<polygon points="734,471.5 739,477.5 735,477.5 735,483.7 733,483.7 733,477.5 729,477.5" fill="#ff0000" shape-rendering="auto"/>
<polygon points="754,481 759,475 755,475 755,468.8 753,468.8 753,475 749,475" fill="#00e000" shape-rendering="auto"/>
<polygon points="768,466.7 773,472.7 769,472.7 769,478.9 767,478.9 767,472.7 763,472.7" fill="#ff0000" shape-rendering="auto"/>
<polygon points="754,525.4 759,519.4 755,519.4 755,513.1999999999999 753,513.1999999999999 753,519.4 749,519.4" fill="#00e000" shape-rendering="auto"/>
<polygon points="803,468.8 808,462.8 804,462.8 804,456.6 802,456.6 802,462.8 798,462.8" fill="#00e000" shape-rendering="auto"/>
<polygon points="817,468 822,462 818,462 818,455.8 816,455.8 816,462 812,462" fill="#00e000" shape-rendering="auto"/>
<polygon points="859,484.5 864,490.5 860,490.5 860,496.7 858,496.7 858,490.5 854,490.5" fill="#ff0000" shape-rendering="auto"/>
<polygon points="872,522.2 877,516.2 873,516.2 873,510.00000000000006 871,510.00000000000006 871,516.2 867,516.2" fill="#00e000" shape-rendering="auto"/>
<polygon points="893,497 898,491 894,491 894,484.8 892,484.8 892,491 888,491" fill="#00e000" shape-rendering="auto"/>
<polygon points="942,566.6 947,572.6 943,572.6 943,578.8000000000001 941,578.8000000000001 941,572.6 937,572.6" fill="#ff0000" shape-rendering="auto"/>
<polygon points="956,530.8 961,536.8 957,536.8 957,543.0 955,543.0 955,536.8 951,536.8" fill="#ff0000" shape-rendering="auto"/>
<polygon points="977,533.5 982,527.5 978,527.5 978,521.3 976,521.3 976,527.5 972,527.5" fill="#00e000" shape-rendering="auto"/>
<polygon points="1011,557.7 1016,563.7 1012,563.7 1012,569.9000000000001 1010,569.9000000000001 1010,563.7 1006,563.7" fill="#ff0000" shape-rendering="auto"/>
<polygon points="1018,546.9 1023,552.9 1019,552.9 1019,559.1 1017,559.1 1017,552.9 1013,552.9" fill="#ff0000" shape-rendering="auto"/>
<rect x="0" y="630" width="1122" height="20" fill="#0b0b0b"/>
<rect x="0" y="19" width="1122" height="1" fill="#a00000"/>
<rect x="23" y="0" width="1" height="19" fill="#a00000"/>
<rect x="0" y="0" width="1" height="19" fill="#a00000"/>
<rect x="1070" y="20" width="1" height="376" fill="#a00000"/>
<rect x="1121" y="0" width="1" height="396" fill="#a00000"/>
<rect x="1070" y="396" width="2" height="250" fill="#8c0000"/>
<rect x="1120" y="396" width="2" height="254" fill="#8c0000"/>
<rect x="0" y="396" width="1130" height="1" fill="#8c0000"/>
<rect x="0" y="397" width="1130" height="1" fill="#5a0000"/>
<rect x="0" y="630" width="1120" height="1" fill="#a00000"/>
<rect x="0" y="646" width="1120" height="1" fill="#a00000"/>
<rect x="0" y="630" width="1" height="20" fill="#a00000"/>
<rect x="1071" y="46" width="5" height="1" fill="#c80000"/>
<rect x="1071" y="60" width="2" height="1" fill="#c80000"/>
<rect x="1071" y="74" width="5" height="1" fill="#c80000"/>
<rect x="1071" y="88" width="2" height="1" fill="#c80000"/>
<rect x="1071" y="103" width="5" height="1" fill="#c80000"/>
<rect x="1071" y="117" width="2" height="1" fill="#c80000"/>
<rect x="1071" y="131" width="5" height="1" fill="#c80000"/>
<rect x="1071" y="145" width="2" height="1" fill="#c80000"/>
<rect x="1071" y="159" width="5" height="1" fill="#c80000"/>
<rect x="1071" y="173" width="2" height="1" fill="#c80000"/>
<rect x="1071" y="188" width="5" height="1" fill="#c80000"/>
<rect x="1071" y="202" width="2" height="1" fill="#c80000"/>
<rect x="1071" y="216" width="5" height="1" fill="#c80000"/>
<rect x="1071" y="230" width="2" height="1" fill="#c80000"/>
<rect x="1071" y="245" width="5" height="1" fill="#c80000"/>
<rect x="1071" y="259" width="2" height="1" fill="#c80000"/>
<rect x="1071" y="273" width="5" height="1" fill="#c80000"/>
<rect x="1071" y="287" width="2" height="1" fill="#c80000"/>
<rect x="1071" y="302" width="5" height="1" fill="#c80000"/>
<rect x="1071" y="316" width="2" height="1" fill="#c80000"/>
<rect x="1071" y="330" width="5" height="1" fill="#c80000"/>
<rect x="1071" y="344" width="2" height="1" fill="#c80000"/>
<rect x="1071" y="358" width="5" height="1" fill="#c80000"/>
<rect x="1072" y="421" width="4" height="1" fill="#c80000"/>
<rect x="1072" y="436" width="1" height="1" fill="#c80000"/>
<rect x="1072" y="452" width="4" height="1" fill="#c80000"/>
<rect x="1072" y="467" width="1" height="1" fill="#c80000"/>
<rect x="1072" y="483" width="4" height="1" fill="#c80000"/>
<rect x="1072" y="498" width="1" height="1" fill="#c80000"/>
<rect x="1072" y="514" width="4" height="1" fill="#c80000"/>
<rect x="1072" y="529" width="1" height="1" fill="#c80000"/>
<rect x="1072" y="545" width="4" height="1" fill="#c80000"/>
<rect x="1072" y="560" width="1" height="1" fill="#c80000"/>
<rect x="1072" y="576" width="4" height="1" fill="#c80000"/>
<rect x="805" y="0" width="1" height="19" fill="#a00000"/>
<rect x="839" y="0" width="1" height="19" fill="#a00000"/>
<rect x="874" y="0" width="1" height="19" fill="#a00000"/>
<rect x="909" y="0" width="1" height="19" fill="#a00000"/>
<rect x="944" y="0" width="1" height="19" fill="#a00000"/>
<rect x="979" y="0" width="1" height="19" fill="#a00000"/>
<rect x="1014" y="0" width="1" height="19" fill="#a00000"/>
<rect x="1049" y="0" width="1" height="19" fill="#a00000"/>
<rect x="1084" y="0" width="1" height="19" fill="#a00000"/>
<rect x="134" y="630" width="1" height="16" fill="#a00000"/>
<rect x="279" y="630" width="1" height="16" fill="#a00000"/>
<rect x="433" y="630" width="1" height="16" fill="#a00000"/>
<rect x="551" y="630" width="1" height="16" fill="#a00000"/>
<rect x="843" y="630" width="1" height="16" fill="#a00000"/>
<rect x="171" y="630" width="1" height="3" fill="#a00000"/>
<rect x="207" y="630" width="1" height="3" fill="#a00000"/>
<rect x="244" y="630" width="1" height="3" fill="#a00000"/>
<rect x="318" y="630" width="1" height="3" fill="#a00000"/>
<rect x="357" y="630" width="1" height="3" fill="#a00000"/>
<rect x="395" y="630" width="1" height="3" fill="#a00000"/>
<rect x="463" y="630" width="1" height="3" fill="#a00000"/>
<rect x="492" y="630" width="1" height="3" fill="#a00000"/>
<rect x="522" y="630" width="1" height="3" fill="#a00000"/>
<rect x="586" y="630" width="1" height="3" fill="#a00000"/>
<rect x="621" y="630" width="1" height="3" fill="#a00000"/>
<rect x="655" y="630" width="1" height="3" fill="#a00000"/>
<rect x="767" y="630" width="1" height="3" fill="#a00000"/>
<rect x="805" y="630" width="1" height="3" fill="#a00000"/>
<rect x="878" y="630" width="1" height="3" fill="#a00000"/>
<rect x="913" y="630" width="1" height="3" fill="#a00000"/>
<rect x="947" y="630" width="1" height="3" fill="#a00000"/>
<rect x="1" y="646" width="1" height="4" fill="#a00000"/>
<rect x="43" y="646" width="1" height="4" fill="#a00000"/>
<rect x="73" y="646" width="1" height="4" fill="#a00000"/>
<rect x="115" y="646" width="1" height="4" fill="#a00000"/>
<rect x="144" y="646" width="1" height="4" fill="#a00000"/>
<rect x="177" y="646" width="1" height="4" fill="#a00000"/>
<rect x="207" y="646" width="1" height="4" fill="#a00000"/>
<rect x="241" y="646" width="1" height="4" fill="#a00000"/>
<rect x="309" y="646" width="1" height="4" fill="#a00000"/>
<rect x="332" y="646" width="1" height="4" fill="#a00000"/>
<rect x="365" y="646" width="1" height="4" fill="#a00000"/>
<rect x="390" y="646" width="1" height="4" fill="#a00000"/>
<rect x="422" y="646" width="1" height="4" fill="#a00000"/>
<rect x="480" y="646" width="1" height="4" fill="#a00000"/>
<rect x="508" y="646" width="1" height="4" fill="#a00000"/>
<rect x="536" y="646" width="1" height="4" fill="#a00000"/>
<rect x="568" y="646" width="1" height="4" fill="#a00000"/>
<rect x="599" y="646" width="1" height="4" fill="#a00000"/>
<rect x="628" y="646" width="1" height="4" fill="#a00000"/>
<rect x="663" y="646" width="1" height="4" fill="#a00000"/>
<rect x="696" y="646" width="1" height="4" fill="#a00000"/>
<rect x="736" y="646" width="1" height="4" fill="#a00000"/>
<rect x="767" y="646" width="1" height="4" fill="#a00000"/>
<rect x="808" y="646" width="1" height="4" fill="#a00000"/>
<rect x="839" y="646" width="1" height="4" fill="#a00000"/>
<rect x="871" y="646" width="1" height="4" fill="#a00000"/>
<rect x="9" y="648" width="1" height="2" fill="#e0e0e0"/>
<rect x="12" y="648" width="1" height="2" fill="#e0e0e0"/>
<rect x="16" y="648" width="1" height="2" fill="#e0e0e0"/>
<rect x="20" y="648" width="1" height="2" fill="#e0e0e0"/>
<rect x="23" y="648" width="1" height="2" fill="#e0e0e0"/>
<rect x="51" y="648" width="1" height="2" fill="#e0e0e0"/>
<rect x="829" y="648" width="1" height="2" fill="#e0e0e0"/>
<rect x="845" y="648" width="8" height="2" fill="#00ffff"/>
<rect x="857" y="648" width="9" height="2" fill="#00ffff"/>
<rect x="1122" y="25" width="8" height="1" fill="#a00000"/>
<rect x="1122" y="45" width="8" height="1" fill="#a00000"/>
<rect x="1122" y="142" width="8" height="1" fill="#a00000"/>
<rect x="1122" y="239" width="8" height="1" fill="#a00000"/>
<rect x="1122" y="336" width="8" height="1" fill="#a00000"/>
<rect x="1122" y="418" width="8" height="1" fill="#a00000"/>
<rect x="1122" y="437" width="8" height="1" fill="#a00000"/>
<rect x="5.5" y="3.6" width="11.000000000000002" height="9.8" rx="2.6" fill="none" stroke="#8c8c8c" stroke-width="1.3" shape-rendering="auto"/>
<rect x="12" y="5" width="3" height="7" fill="#9c9c9c"/>
<rect x="1055.3999999999999" y="24.5" width="11.200000000000092" height="10.000000000000004" rx="2.6" fill="none" stroke="#8c8c8c" stroke-width="1.3" shape-rendering="auto"/>
<rect x="1062" y="26" width="3" height="7" fill="#9c9c9c"/>
<polygon points="1042.5,24.2 1047.8,29.5 1042.5,34.8 1037.2,29.5" fill="none" stroke="#8c8c8c" stroke-width="1" shape-rendering="auto"/>
<circle cx="134" cy="29" r="6.2" fill="#808080" shape-rendering="auto"/>
<polyline points="131,27.7 134,30.7 137,27.7" fill="none" stroke="#1c1c1c" stroke-width="1.1" shape-rendering="auto"/>
<circle cx="8" cy="405.2" r="6.2" fill="#808080" shape-rendering="auto"/>
<polyline points="5,403.9 8,406.9 11,403.9" fill="none" stroke="#1c1c1c" stroke-width="1.1" shape-rendering="auto"/>
</svg>
<div class="t" style="left:28px;top:2px;color:#ffffff;font-size:12px;">分时</div><div class="t" style="left:61px;top:2px;color:#ffffff;font-size:12px;">1分钟</div><div class="t" style="left:100px;top:2px;color:#ffffff;font-size:12px;">5分钟</div><div class="t" style="left:139px;top:2px;color:#ffffff;font-size:12px;">15分钟</div><div class="t" style="left:185px;top:2px;color:#ffffff;font-size:12px;">30分钟</div><div class="t" style="left:231px;top:2px;color:#ffffff;font-size:12px;">60分钟</div><div class="t" style="left:278px;top:2px;color:#00e6e6;font-size:12px;">日线</div><div class="t" style="left:312px;top:2px;color:#ffffff;font-size:12px;">周线</div><div class="t" style="left:345px;top:2px;color:#ffffff;font-size:12px;">月线</div><div class="t" style="left:378px;top:2px;color:#ffffff;font-size:12px;">多周期</div><div class="t" style="left:422px;top:2px;color:#ffffff;font-size:12px;">更多 &gt;</div><div class="t" style="left:811px;top:2px;color:#ffffff;font-size:12px;">复权</div><div class="t" style="left:845px;top:2px;color:#ffffff;font-size:12px;">叠加</div><div class="t" style="left:879px;top:2px;color:#ffffff;font-size:12px;">多股</div><div class="t" style="left:915px;top:2px;color:#ffffff;font-size:12px;">统计</div><div class="t" style="left:950px;top:2px;color:#ffffff;font-size:12px;">画线</div><div class="t" style="left:987px;top:2px;color:#ffffff;font-size:12px;">F10</div><div class="t" style="left:1020px;top:2px;color:#ffffff;font-size:12px;">标记</div><div class="t" style="left:1053px;top:2px;color:#ffffff;font-size:12px;">+自选</div><div class="t" style="left:1090px;top:2px;color:#ffffff;font-size:12px;">返回</div><div class="t" style="left:3px;top:22px;color:#ffffff;font-size:12px;">先河环保(日线.前复权)</div><div class="t r" style="left:1075px;width:40px;top:40px;color:#c80000;font-size:12px;letter-spacing:-0.1px;">11.50</div><div class="t r" style="left:1075px;width:40px;top:68px;color:#c80000;font-size:12px;letter-spacing:-0.1px;">11.00</div><div class="t r" style="left:1075px;width:40px;top:97px;color:#c80000;font-size:12px;letter-spacing:-0.1px;">10.50</div><div class="t r" style="left:1075px;width:40px;top:125px;color:#c80000;font-size:12px;letter-spacing:-0.1px;">10.00</div><div class="t r" style="left:1075px;width:40px;top:153px;color:#c80000;font-size:12px;letter-spacing:-0.1px;">9.50</div><div class="t r" style="left:1075px;width:40px;top:182px;color:#c80000;font-size:12px;letter-spacing:-0.1px;">9.00</div><div class="t r" style="left:1075px;width:40px;top:210px;color:#c80000;font-size:12px;letter-spacing:-0.1px;">8.50</div><div class="t r" style="left:1075px;width:40px;top:239px;color:#c80000;font-size:12px;letter-spacing:-0.1px;">8.00</div><div class="t r" style="left:1075px;width:40px;top:267px;color:#c80000;font-size:12px;letter-spacing:-0.1px;">7.50</div><div class="t r" style="left:1075px;width:40px;top:296px;color:#c80000;font-size:12px;letter-spacing:-0.1px;">7.00</div><div class="t r" style="left:1075px;width:40px;top:324px;color:#c80000;font-size:12px;letter-spacing:-0.1px;">6.50</div><div class="t r" style="left:1075px;width:40px;top:352px;color:#c80000;font-size:12px;letter-spacing:-0.1px;">6.00</div><div class="t r" style="left:1075px;width:40px;top:415px;color:#c80000;font-size:12px;letter-spacing:-0.1px;">100.0</div><div class="t r" style="left:1075px;width:40px;top:446px;color:#c80000;font-size:12px;letter-spacing:-0.1px;">80.00</div><div class="t r" style="left:1075px;width:40px;top:477px;color:#c80000;font-size:12px;letter-spacing:-0.1px;">60.00</div><div class="t r" style="left:1075px;width:40px;top:508px;color:#c80000;font-size:12px;letter-spacing:-0.1px;">40.00</div><div class="t r" style="left:1075px;width:40px;top:539px;color:#c80000;font-size:12px;letter-spacing:-0.1px;">20.00</div><div class="t r" style="left:1075px;width:40px;top:570px;color:#c80000;font-size:12px;letter-spacing:-0.1px;">0.00</div><div style="position:absolute;left:1072px;top:451px;width:48px;height:15px;background:#3c0a8c;"></div><div class="t" style="left:1072px;top:451px;color:#ffffff;font-size:12px;">71.13</div><div class="t" style="left:18px;top:398px;color:#ffffff;font-size:12px;">股朋指标网</div><div class="t" style="left:83px;top:398px;color:#ffffff;font-size:12px;">MACD: 1.88</div><div class="t" style="left:152px;top:398px;color:#0000ff;font-size:12px;">警戒雷达: <span style="color:#0000ff">0.00</span></div><div class="t" style="left:235px;top:398px;color:#ffff00;font-size:12px;">K: 52.52</div><div class="t" style="left:285px;top:398px;color:#ff00ff;font-size:12px;">D: 40.33</div><div class="t" style="left:335px;top:398px;color:#ff00ff;font-size:12px;">J: 76.91</div><div class="t" style="left:3px;top:632px;color:#c80000;font-size:12px;">2025年</div><div class="t" style="left:136px;top:632px;color:#c80000;font-size:12px;">8</div><div class="t" style="left:281px;top:632px;color:#c80000;font-size:12px;">9</div><div class="t" style="left:435px;top:632px;color:#c80000;font-size:12px;">10</div><div class="t" style="left:553px;top:632px;color:#c80000;font-size:12px;">11</div><div class="t" style="left:845px;top:632px;color:#c80000;font-size:12px;">1</div><div style="position:absolute;left:677px;top:631px;width:77px;height:15px;background:#3c0a8c;"></div><div class="t" style="left:678px;top:631px;color:#ffffff;font-size:12px;">2025/11/27/四</div><div style="position:absolute;left:978px;top:600px;width:152px;height:50px;background:#000;"></div><div class="t" style="left:999px;top:612px;color:#fff;font-size:19px;font-weight:900;font-family:'Liberation Serif','Noto Serif CJK SC',serif;letter-spacing:1.7px;">乐淘公式网</div><div class="t" style="left:1001px;top:633px;color:#fff;font-size:13px;font-weight:bold;letter-spacing:1.1px;font-family:'Liberation Serif',serif;">www.60lt.com</div><div style="position:absolute;left:1123px;top:0;width:7px;height:600px;overflow:hidden;"><div class="t" style="left:0;top:26px;color:#e6e6e6;font-size:16px;line-height:19px;">委</div><div class="t" style="left:0;top:47.5px;color:#e6e6e6;font-size:18px;line-height:19px;">卖</div><div class="t" style="left:0;top:66.9px;color:#e6e6e6;font-size:18px;line-height:19px;">卖</div><div class="t" style="left:0;top:86.3px;color:#e6e6e6;font-size:18px;line-height:19px;">卖</div><div class="t" style="left:0;top:105.69999999999999px;color:#e6e6e6;font-size:18px;line-height:19px;">卖</div><div class="t" style="left:0;top:125.1px;color:#e6e6e6;font-size:18px;line-height:19px;">卖</div><div class="t" style="left:0;top:144.5px;color:#e6e6e6;font-size:18px;line-height:19px;">买</div><div class="t" style="left:0;top:163.9px;color:#e6e6e6;font-size:18px;line-height:19px;">买</div><div class="t" style="left:0;top:183.3px;color:#e6e6e6;font-size:18px;line-height:19px;">买</div><div class="t" style="left:0;top:202.7px;color:#e6e6e6;font-size:18px;line-height:19px;">买</div><div class="t" style="left:0;top:222.1px;color:#e6e6e6;font-size:18px;line-height:19px;">买</div><div class="t" style="left:0;top:242.5px;color:#e6e6e6;font-size:14px;line-height:19px;">现</div><div class="t" style="left:0;top:261.8px;color:#e6e6e6;font-size:14px;line-height:19px;">涨</div><div class="t" style="left:0;top:281.1px;color:#e6e6e6;font-size:14px;line-height:19px;">涨</div><div class="t" style="left:0;top:300.4px;color:#e6e6e6;font-size:14px;line-height:19px;">总</div><div class="t" style="left:0;top:319.7px;color:#e6e6e6;font-size:14px;line-height:19px;">外</div><div class="t" style="left:0;top:339.5px;color:#e6e6e6;font-size:14px;line-height:19px;">换</div><div class="t" style="left:0;top:357.7px;color:#e6e6e6;font-size:14px;line-height:19px;">净</div><div class="t" style="left:0;top:375.9px;color:#e6e6e6;font-size:14px;line-height:19px;">收</div><div class="t" style="left:0;top:397.3px;color:#e6e600;font-size:14px;line-height:19px;">自</div><div class="t" style="left:0;top:417.8px;color:#e6e6e6;font-size:14px;line-height:19px;">交</div><div class="t" style="left:0;top:438.0px;color:#ffffff;font-size:14px;line-height:19px;font-weight:bold;">1</div><div class="t" style="left:0;top:455.6px;color:#ffffff;font-size:14px;line-height:19px;font-weight:bold;">1</div><div class="t" style="left:0;top:473.2px;color:#ffffff;font-size:14px;line-height:19px;font-weight:bold;">1</div><div class="t" style="left:0;top:490.8px;color:#ffffff;font-size:14px;line-height:19px;font-weight:bold;">1</div><div class="t" style="left:0;top:508.4px;color:#ffffff;font-size:14px;line-height:19px;font-weight:bold;">1</div><div class="t" style="left:0;top:526.0px;color:#ffffff;font-size:14px;line-height:19px;font-weight:bold;">1</div><div class="t" style="left:0;top:543.6px;color:#ffffff;font-size:14px;line-height:19px;font-weight:bold;">1</div><div class="t" style="left:0;top:561.2px;color:#ffffff;font-size:14px;line-height:19px;font-weight:bold;">1</div><div class="t" style="left:0;top:578.8px;color:#ffffff;font-size:14px;line-height:19px;font-weight:bold;">1</div></div>
</body></html>
